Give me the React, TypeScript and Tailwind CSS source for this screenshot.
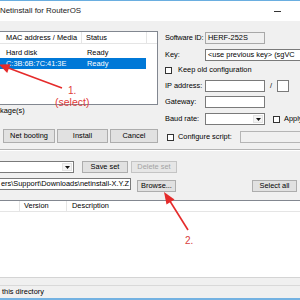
import React from "react";

function Btn({ label, className = "", disabled = false }: { label: string; className?: string; disabled?: boolean }) {
  return (
    <div
      className={
        disabled
          ? `flex shrink-0 items-center justify-center whitespace-nowrap border border-[#c4c4c4] bg-[#e6e6e6] text-[#a3a3a3] ${className}`
          : `flex shrink-0 items-center justify-center whitespace-nowrap border border-[#adadad] bg-[#e1e1e1] text-black ${className}`
      }
    >
      {label}
    </div>
  );
}

function Check({ className = "" }: { className?: string }) {
  return <div className={`h-[7px] w-[7px] shrink-0 border border-[#333333] bg-white ${className}`} />;
}

function Arrow() {
  return (
    <div className="flex h-full w-[10px] shrink-0 items-center justify-center border border-[#e3e3e3] bg-[#f4f4f4]">
      <svg width="5" height="3" viewBox="0 0 5 3">
        <path d="M0 0H5L2.5 3Z" fill="#111" />
      </svg>
    </div>
  );
}

export default function App() {
  return (
    <div className="relative h-[300px] w-[300px] overflow-hidden bg-[#f0f0f0] font-['Liberation_Sans',Arial,sans-serif] text-[7.4px] leading-none text-black">
      {/* title bar */}
      <div className="flex h-[21px] items-center justify-between border-t border-[#6aaee0] bg-white pr-[19px]">
        <span className="whitespace-nowrap text-[7.9px] text-[#1a1a1a]">Netinstall for RouterOS</span>
        <div className="h-px w-[7px] bg-[#333333]" />
      </div>
      <div className="h-[10px]" />

      {/* top section */}
      <div className="flex">
        <div className="flex w-[158px] shrink-0 flex-col">
          <div className="h-[74px] border-y border-r border-[#828790] bg-white">
            <div className="flex h-[12px] border-b border-[#e5e5e5]">
              <div className="flex w-[82px] items-center whitespace-nowrap border-r border-[#e5e5e5] pl-[6px]">MAC address / Media</div>
              <div className="flex w-[65px] items-center border-r border-[#e5e5e5] pl-[4px]">Status</div>
            </div>
            <div className="mt-[3px] flex h-[11px] items-center">
              <div className="w-[82px] pl-[6px]">Hard disk</div>
              <div className="pl-[5px]">Ready</div>
            </div>
            <div className="flex h-[11px] w-[146px] items-center bg-[#0078d7] text-white">
              <div className="w-[82px] whitespace-nowrap pl-[6px]">C:3B:6B:7C:41:3E</div>
              <div className="pl-[5px]">Ready</div>
            </div>
          </div>
          <div className="flex h-[12px] items-center">kage(s)</div>
          <div className="mt-[12px] flex h-[14px] gap-[2px] pl-[3px]">
            <Btn label="Net booting" className="w-[52px]" />
            <Btn label="Install" className="w-[51px]" />
            <Btn label="Cancel" className="w-[48px]" />
          </div>
        </div>

        <div className="ml-[7px] flex flex-1 flex-col pt-px">
          <div className="flex h-[12px] items-center">
            <span className="w-[40px] shrink-0 whitespace-nowrap tracking-[-0.2px]">Software ID:</span>
            <div className="flex h-full w-[60px] shrink-0 items-center border border-[#a8a8a8] bg-[#f0f0f0] pl-[2px]">HERF-252S</div>
          </div>
          <div className="mt-[5px] flex h-[12px] items-center">
            <span className="w-[40px] shrink-0">Key:</span>
            <div className="flex h-full w-[110px] shrink-0 items-center overflow-hidden whitespace-nowrap border border-[#7a7a7a] bg-white pl-[2px]">
              {"<use previous key> (sgVC"}
            </div>
          </div>
          <div className="mt-[3px] flex h-[12px] items-center">
            <Check />
            <span className="ml-[6px] whitespace-nowrap">Keep old configuration</span>
          </div>
          <div className="mt-[4px] flex h-[12px] items-center">
            <span className="w-[40px] shrink-0 whitespace-nowrap">IP address:</span>
            <div className="h-full w-[60px] shrink-0 border border-[#7a7a7a] bg-white" />
            <span className="ml-[5px]">/</span>
            <div className="ml-[5px] h-full w-[12px] shrink-0 border border-[#7a7a7a] bg-white" />
          </div>
          <div className="mt-[4px] flex h-[12px] items-center">
            <span className="w-[40px] shrink-0">Gateway:</span>
            <div className="h-full w-[60px] shrink-0 border border-[#7a7a7a] bg-white" />
          </div>
          <div className="mt-[5px] flex h-[12px] items-center">
            <span className="w-[40px] shrink-0 whitespace-nowrap">Baud rate:</span>
            <div className="flex h-full w-[60px] shrink-0 justify-end border border-[#7a7a7a] bg-white p-px">
              <Arrow />
            </div>
            <Check className="ml-[8px]" />
            <span className="ml-[4px] whitespace-nowrap">Apply</span>
          </div>
          <div className="mt-[6px] flex h-[12px] items-center">
            <Check className="ml-[2px]" />
            <span className="ml-[4px] whitespace-nowrap">Configure script:</span>
            <div className="ml-[8px] h-full w-[80px] shrink-0 border border-[#b5b5b5] bg-[#f0f0f0]" />
          </div>
        </div>
      </div>

      {/* separator */}
      <div className="mt-[6px] h-px bg-[#b4b4b4]" />
      <div className="h-px bg-white" />

      {/* sets row */}
      <div className="mt-[10px] flex h-[12px]">
        <div className="flex h-full w-[74px] shrink-0 justify-end border-y border-r border-[#7a7a7a] bg-white p-px">
          <Arrow />
        </div>
        <Btn label="Save set" className="ml-[8px] w-[46px]" />
        <Btn label="Delete set" className="ml-[3px] w-[46px]" disabled />
      </div>

      {/* path row */}
      <div className="mt-[5px] flex h-[14px] items-start">
        <div className="flex h-[12px] w-[131px] shrink-0 items-center overflow-hidden whitespace-nowrap border-y border-r border-[#7a7a7a] bg-white pl-px">
          {"ers\\Support\\Downloads\\netinstall-X.Y.Z"}
        </div>
        <Btn label="Browse..." className="ml-[6px] mt-[2px] h-[12px] w-[39px]" />
        <Btn label="Select all" className="ml-auto mr-[3px] mt-[2px] h-[12px] w-[45px]" />
      </div>

      {/* package list */}
      <div className="mt-[8px] flex flex-col border-t border-[#828790] bg-white">
        <div className="flex h-[11px] border-b border-[#e5e5e5]">
          <div className="w-[20px] border-r border-[#e5e5e5]" />
          <div className="flex w-[47px] items-center border-r border-[#e5e5e5] pl-[4px]">Version</div>
          <div className="flex items-center pl-[5px]">Description</div>
        </div>
        <div className="h-[65px]" />
      </div>
      <div className="h-[8px] border-t border-[#d4d4d4] bg-[#f0f0f0]" />
      <div className="flex h-[13px] items-center whitespace-nowrap border-t border-[#d9d9d9] pl-[2px]">this directory</div>
      <div className="h-[2px] bg-[#74b2e2]" />

      {/* annotations */}
      <svg className="pointer-events-none absolute inset-0" width="300" height="300" viewBox="0 0 300 300">
        <line x1="62" y1="88" x2="7" y2="67.5" stroke="#e52b2b" strokeWidth="1.6" />
        <path d="M-1 64.5L10.5 64.2L7.2 73Z" fill="#e52b2b" />
        <line x1="188" y1="230" x2="168" y2="198" stroke="#e52b2b" strokeWidth="1.6" />
        <path d="M164 192L174.5 199.5L166.5 204.5Z" fill="#e52b2b" />
      </svg>
      <span className="absolute left-[68px] top-[86px] text-[10px] leading-none text-[#df3a3a]">1.</span>
      <span className="absolute left-[55px] top-[97px] text-[10.5px] leading-none text-[#df3a3a]">(select)</span>
      <span className="absolute left-[185px] top-[236px] text-[10px] leading-none text-[#d94040]">2.</span>
    </div>
  );
}
